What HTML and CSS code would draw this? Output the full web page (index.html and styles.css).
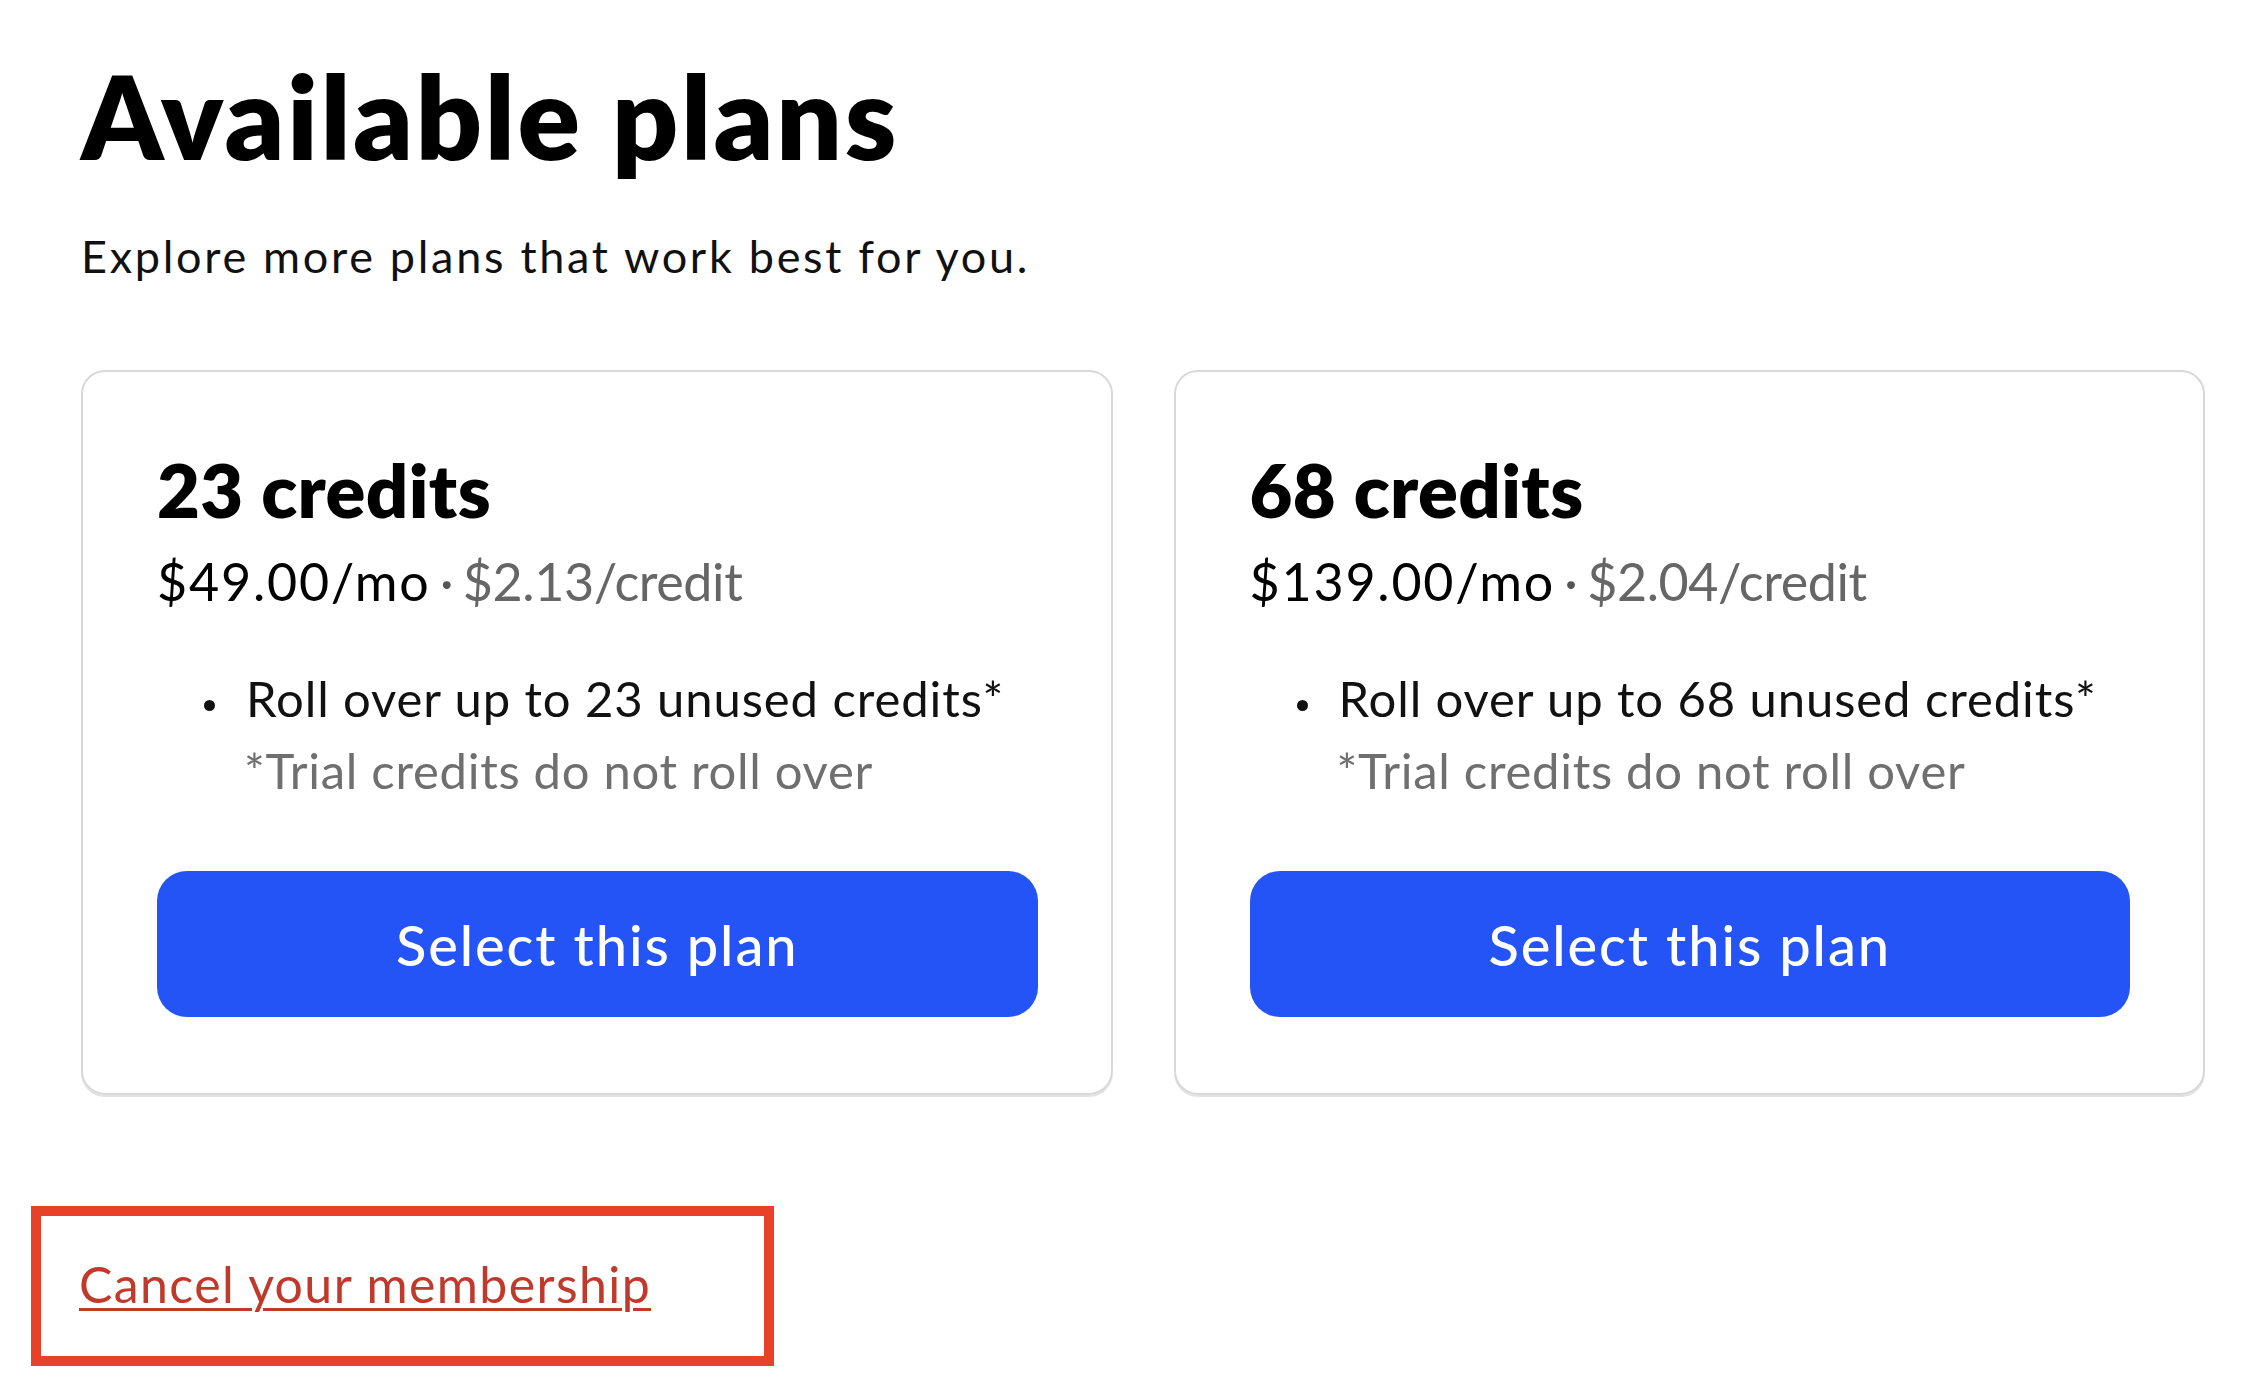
FILE: index.html
```html
<!DOCTYPE html>
<html lang="en">
<head>
<meta charset="utf-8">
<title>Available plans</title>
<link rel="stylesheet" href="styles.css">
</head>
<body>
<main class="page">
  <header class="intro">
    <h1 class="title">Available plans</h1>
    <p class="subtitle">Explore more plans that work best for you.</p>
  </header>
  <section class="plans">
    <article class="plan">
      <h2 class="plan-name">23 credits</h2>
      <p class="plan-price"><span class="main">$49.00/mo</span><span class="sep"> · </span><span class="per">$2.13/credit</span></p>
      <ul class="plan-features">
        <li class="feature">Roll over up to 23 unused credits*</li>
      </ul>
      <p class="plan-note">*Trial credits do not roll over</p>
      <button class="plan-btn" type="button">Select this plan</button>
    </article>
    <article class="plan">
      <h2 class="plan-name">68 credits</h2>
      <p class="plan-price"><span class="main">$139.00/mo</span><span class="sep"> · </span><span class="per">$2.04/credit</span></p>
      <ul class="plan-features">
        <li class="feature">Roll over up to 68 unused credits*</li>
      </ul>
      <p class="plan-note">*Trial credits do not roll over</p>
      <button class="plan-btn" type="button">Select this plan</button>
    </article>
  </section>
  <div class="cancel-box">
    <a class="cancel-link" href="#">Cancel your membership</a>
  </div>
</main>
</body>
</html>
```
FILE: styles.css
```css
* { box-sizing: border-box; }
html, body { margin: 0; padding: 0; background: #fff; }
body {
  font-family: Lato, "Noto Sans", "Liberation Sans", sans-serif;
  color: #111;
}
.page {
  padding: 46px 59px 0 81px;
}
.title {
  margin: 0;
  font-size: 116px;
  line-height: 1.2;
  font-weight: 800;
  color: #000;
  letter-spacing: 2.5px;
}
.subtitle {
  margin: 44px 0 0;
  font-size: 45px;
  line-height: 1.2;
  font-weight: 400;
  color: #111;
  letter-spacing: 2.7px;
}
.plans {
  margin-top: 87px;
  display: grid;
  grid-template-columns: 1fr 1fr;
  gap: 61px;
}
.plan {
  border: 2px solid #d8d8d8;
  border-radius: 24px;
  padding: 74px 73px 76px 74px;
  display: flex;
  flex-direction: column;
  box-shadow: 0 2px 0 #e2e2e2;
}
.plan-name {
  margin: 0;
  font-size: 74px;
  line-height: 1.2;
  font-weight: 800;
  color: #000;
  letter-spacing: 0.4px;
}
.plan-price {
  margin: 15px 0 0;
  font-size: 52px;
  line-height: 1.2;
  color: #000;
}
.main { letter-spacing: 1.8px; }
.sep { color: #555; word-spacing: -4px; }
.per { color: #666; letter-spacing: -0.4px; }
.plan-features {
  list-style: none;
  margin: 50px 0 0;
  padding: 0 0 0 89px;
}
.feature {
  position: relative;
  font-size: 49px;
  line-height: 72px;
  color: #111;
  letter-spacing: 0.9px;
}
.feature::before {
  content: "";
  position: absolute;
  left: -42px;
  top: 38px;
  width: 11px;
  height: 11px;
  border-radius: 50%;
  background: #111;
}
.plan-note {
  margin: 0;
  padding-left: 87px;
  font-size: 49px;
  line-height: 72px;
  color: #6f6f6f;
  letter-spacing: 0.7px;
}
.plan-btn {
  margin-top: 65px;
  height: 146px;
  width: 100%;
  border: none;
  border-radius: 30px;
  background: #2454f5;
  color: #fff;
  font-family: Lato, "Noto Sans", "Liberation Sans", sans-serif;
  font-size: 56px;
  font-weight: 500;
  letter-spacing: 1.9px;
  cursor: pointer;
}
.cancel-box {
  margin: 111px 0 0 -50px;
  width: 743px;
  height: 160px;
  border: 10px solid #e8412a;
  padding: 38px 0 0 38px;
}
.cancel-link {
  font-size: 50px;
  line-height: 1.2;
  color: #c0392b;
  letter-spacing: 1.4px;
  text-decoration: underline;
  text-decoration-thickness: 3px;
  text-underline-offset: 5px;
}
```
